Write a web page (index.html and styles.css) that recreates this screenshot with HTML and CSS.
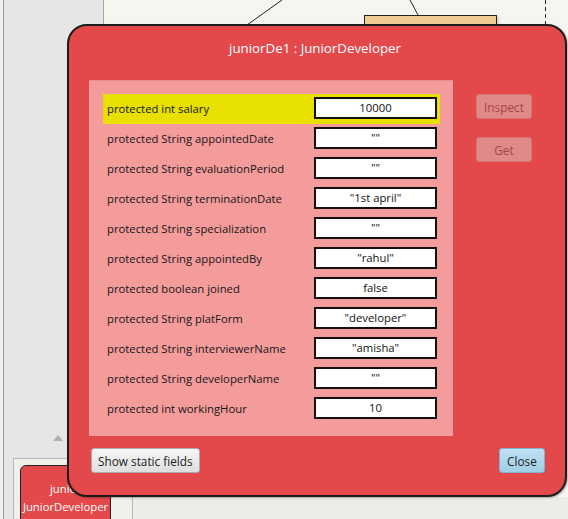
FILE: index.html
```html
<!DOCTYPE html>
<html>
<head>
<meta charset="utf-8">
<link rel="stylesheet" href="styles.css">
</head>
<body>
<div class="desk">
  <div class="sidebar"></div>
  <div class="bottom-band"></div>
  <svg class="lines" width="568" height="519" viewBox="0 0 568 519">
    <line x1="282" y1="0" x2="247" y2="25" stroke="#222" stroke-width="1"/>
    <line x1="410" y1="0" x2="418" y2="15" stroke="#222" stroke-width="1"/>
    <line x1="545.5" y1="0" x2="545.5" y2="25" stroke="#222" stroke-width="1" stroke-dasharray="4 3"/>
    <polygon points="53,441 58,435 63,441" fill="#b0b0b0"/>
  </svg>
  <div class="class-node top-node">JuniorDeveloper</div>
  <div class="bench">
    <div class="obj-node">junior<br>JuniorDeveloper</div>
  </div>

  <div class="dialog">
    <div class="title">juniorDe1 : JuniorDeveloper</div>
    <div class="main">
      <div class="fields">
        <div class="row selected"><span class="label">protected int salary</span><span class="value">10000</span></div>
        <div class="row"><span class="label">protected String appointedDate</span><span class="value">""</span></div>
        <div class="row"><span class="label">protected String evaluationPeriod</span><span class="value">""</span></div>
        <div class="row"><span class="label">protected String terminationDate</span><span class="value">"1st april"</span></div>
        <div class="row"><span class="label">protected String specialization</span><span class="value">""</span></div>
        <div class="row"><span class="label">protected String appointedBy</span><span class="value">"rahul"</span></div>
        <div class="row"><span class="label">protected boolean joined</span><span class="value">false</span></div>
        <div class="row"><span class="label">protected String platForm</span><span class="value">"developer"</span></div>
        <div class="row"><span class="label">protected String interviewerName</span><span class="value">"amisha"</span></div>
        <div class="row"><span class="label">protected String developerName</span><span class="value">""</span></div>
        <div class="row"><span class="label">protected int workingHour</span><span class="value">10</span></div>
      </div>
      <div class="side-buttons">
        <button class="btn disabled">Inspect</button>
        <button class="btn disabled">Get</button>
      </div>
    </div>
    <div class="footer">
      <button class="btn plain">Show static fields</button>
      <button class="btn blue">Close</button>
    </div>
  </div>
</div>
</body>
</html>
```

FILE: styles.css
```css
* { box-sizing: border-box; }
html, body {
  margin: 0;
  padding: 0;
}
body {
  width: 568px;
  height: 519px;
  overflow: hidden;
  font-family: "Open Sans", "Noto Sans", sans-serif;
  background: #f6f5f0;
}
.desk {
  position: relative;
  width: 568px;
  height: 519px;
}
.sidebar {
  position: absolute;
  left: 0;
  top: 0;
  width: 104px;
  height: 519px;
  background: #e6e6e6;
  border-left: 3px solid #f0f0f0;
  border-right: 1px solid #a8a8a8;
  box-shadow: inset 1px 0 0 #9a9a9a;
}
.bottom-band {
  position: absolute;
  left: 104px;
  top: 497px;
  width: 464px;
  height: 22px;
  background: #eeece7;
}
.lines {
  position: absolute;
  left: 0;
  top: 0;
}
.class-node {
  position: absolute;
  left: 364px;
  top: 15px;
  width: 133px;
  height: 30px;
  background: #f1cc95;
  border: 1px solid #222;
  font-size: 13px;
  font-weight: bold;
  text-align: center;
  padding-top: 4px;
  color: #333;
  box-shadow: 2px 2px 2px rgba(0,0,0,0.15);
}
.bench {
  position: absolute;
  left: 13px;
  top: 458px;
  width: 120px;
  height: 70px;
  background: #f0efea;
  border: 1px solid #b8b8b8;
}
.obj-node {
  position: absolute;
  left: 6px;
  top: 6px;
  width: 91px;
  height: 60px;
  background: #e3494b;
  border: 1px solid #222;
  border-radius: 6px 6px 0 0;
  color: #fff;
  font-size: 11.3px;
  line-height: 18px;
  text-align: center;
  padding-top: 14px;
}

.dialog {
  position: absolute;
  left: 67px;
  top: 24px;
  width: 500px;
  height: 473px;
  background: #e3494b;
  border: 2px solid #1c1c1c;
  border-radius: 20px;
  padding: 0 20px 0 20px;
  display: flex;
  flex-direction: column;
  box-shadow: 1px 1px 2px rgba(0,0,0,0.3);
}
.title {
  height: 54px;
  padding-top: 13px;
  color: #fff;
  font-size: 13.3px;
  line-height: 18px;
  text-align: center;
  padding-right: 4px;
}
.main {
  display: flex;
  gap: 23px;
}
.fields {
  width: 364px;
  height: 356px;
  background: #f49c9c;
  border-top: 1px solid #ef8a8a;
  padding: 13px 13px 0 14px;
  display: flex;
  flex-direction: column;
}
.row {
  height: 30px;
  display: flex;
  align-items: flex-start;
  justify-content: space-between;
  padding: 3px 3px 0 4px;
}
.row.selected {
  background: #e8e000;
}
.label {
  font-size: 11.3px;
  line-height: 22px;
  padding-top: 1px;
  color: #161616;
}
.value {
  width: 123px;
  height: 22px;
  background: #fff;
  border: 2px solid #111;
  font-size: 11.3px;
  line-height: 18px;
  text-align: center;
  color: #111;
}
.side-buttons {
  display: flex;
  flex-direction: column;
  gap: 18px;
  padding-top: 14px;
}
.btn {
  font-family: "Open Sans", "Noto Sans", sans-serif;
  font-size: 11.8px;
  height: 25px;
  padding: 0 6px;
  border-radius: 3px;
  cursor: default;
}
.btn.disabled {
  width: 56px;
  background: #e08a8a;
  border: 1px solid #d67575;
  color: #a34646;
}
.footer {
  display: flex;
  justify-content: space-between;
  margin-top: 12px;
  padding: 0 0 0 2px;
}
.btn.plain {
  background: linear-gradient(#f6f6f6, #dedede);
  border: 1px solid #acacac;
  color: #222;
}
.btn.blue {
  width: 46px;
  background: linear-gradient(#bfe0f1, #9fcfe6);
  border: 1px solid #7eb4cf;
  color: #222;
}
```
